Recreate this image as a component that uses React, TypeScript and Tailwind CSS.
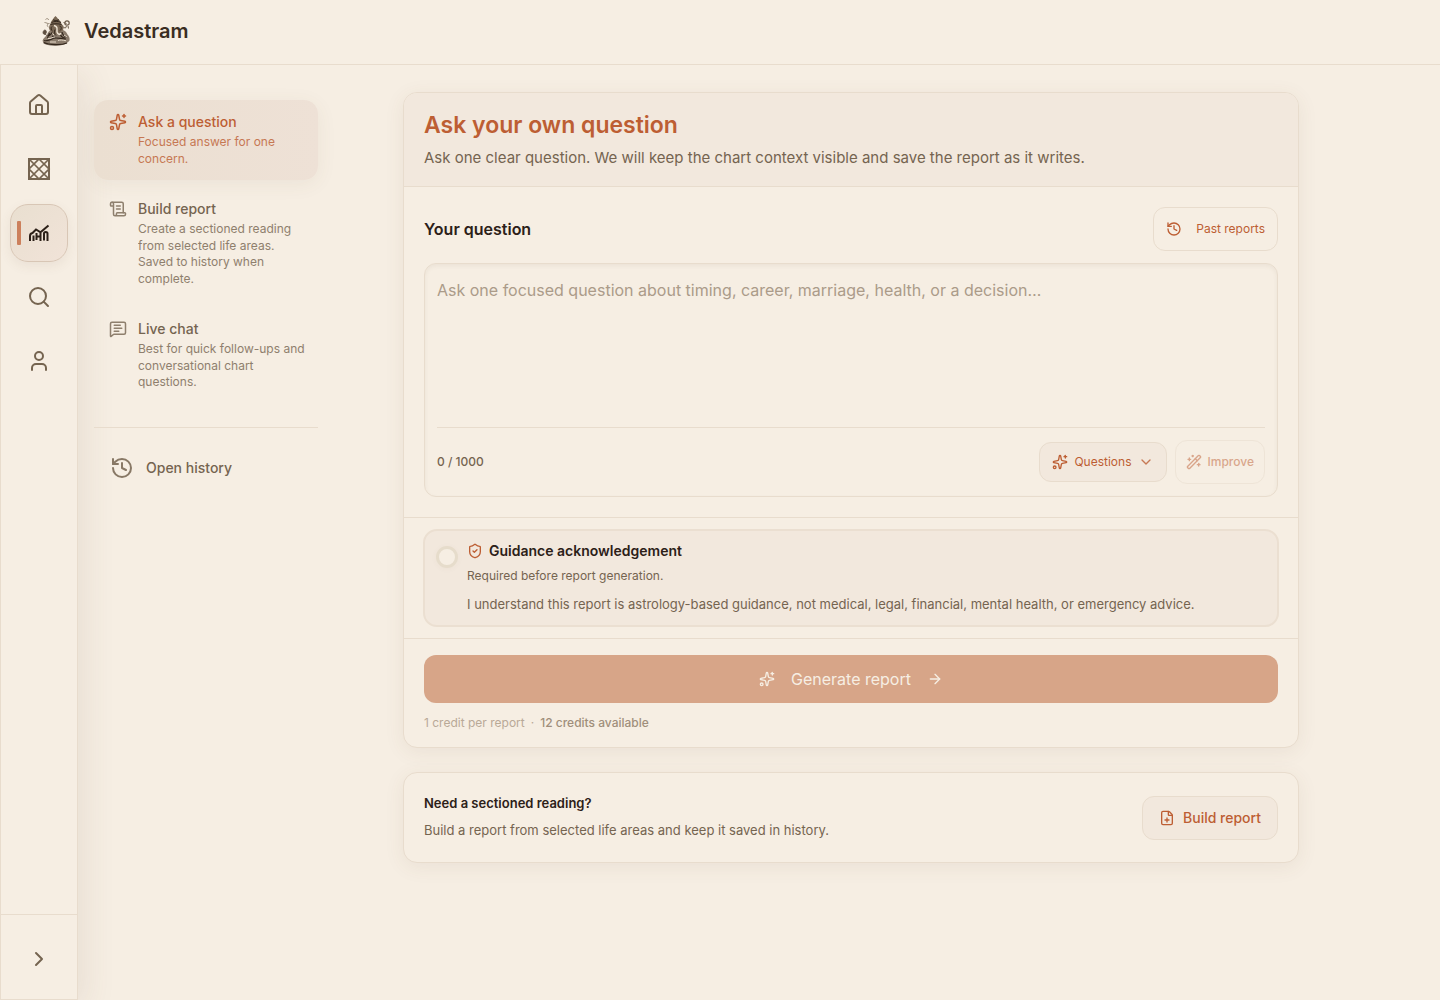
import React from "react";
import {
  ArrowRight,
  ChevronDown,
  ChevronRight,
  FilePlus,
  History,
  House,
  MessageSquareText,
  ScrollText,
  Search,
  ShieldCheck,
  Sparkles,
  User,
  WandSparkles,
} from "lucide-react";

function SparkleIcon({ size = 16 }: { size?: number }) {
  return <Sparkles size={size} strokeWidth={2} className="shrink-0" aria-hidden="true" />;
}

function GaneshaLogo() {
  return (
    <svg width="32" height="32" viewBox="0 0 32 32" fill="none" aria-hidden="true" className="shrink-0">
      <ellipse cx="15" cy="27.500" rx="12" ry="3.200" fill="#85776a" />
      <path d="M2.500 26c.5-3 3-4 4.500-6 .8-2.500 2-4.500 4.500-5.500h10c3 .5 5 2.500 6 5 1.500 1.500 2.500 3.500 2 6-2 3-7 4.500-13 4.500S4 29 2.500 26z" fill="#8a7b6c" />
      <path d="M10.500 8.500C11 5.500 13 5 14 2.500l1.500-1.500L17 2.500c1 2 4 3 4.500 6.500l2 2c.5 3-.5 5-2.500 5.500l-2 3h-5l-2.500-3c-2.500-1-3-3.500-2-6z" fill="#7a6855" />
      <path d="M11.500 7.500c2.500-1.500 7-1.500 9.500 0M13 4.800l3 1 3-1M10.500 9.500c3-1 8-1 11 0" stroke="#33271d" strokeWidth="1" />
      <path d="M14 10.500c2 .5 3.300 2 3 4-.3 2.500 0 4 1.500 4.500s2 0 2-1" stroke="#efe4d5" strokeWidth="1.400" />
      <path d="M12 11.500c-1.500 1-1 4 .5 4.500M19.500 11c2 0 2.500 3 .5 4.500M15 14.500c-1 2-.5 5 1 6" stroke="#33271d" strokeWidth="1" />
      <path d="M7.500 20.500c2 .5 3.500-1 4.500-3M9.500 18l-2 5M22 17c.5 2.500 2.500 4.500 5 5M20.500 20c1 2 3 3 5 3" stroke="#33271d" strokeWidth="1.200" />
      <path d="M4 25.500c4 1.500 8-2.500 12-2.500 3 0 6 1 10 1M4 27.500c5 2.500 17 3 23 .5M12 21l3 1.500" stroke="#33271d" strokeWidth="1.200" />
      <path d="M8 23.500c3 .5 4-1.500 7-1.500M18 25.500c2-.8 5-.6 8 .3M10 27h6M24 20l3 2M12.500 18.500l1.500 1.500" stroke="#e6dac9" strokeWidth="1" />
      <path d="M5.500 4.500c1.500-1.500 3-1 3 .5M4.500 7.500c2 0 3 1.500 5 1M8.500 12c-1.500-.5-1.500-2-.5-3" stroke="#9b8d7c" strokeWidth="1" />
      <path d="M3 18c0-2 1-3 2-3s2 2 1 3.500-2.500 1-3-.5zM5 19l2.500 2" fill="#5d4e40" stroke="#5d4e40" strokeWidth=".8" />
      <circle cx="27" cy="8" r="2.200" stroke="#6d5d4c" strokeWidth="1.200" />
      <path d="M23.500 7.500l3 1M26.500 11l-1 2-2-.5M28 11l.5 2.500" stroke="#6d5d4c" strokeWidth="1" />
    </svg>
  );
}

function KundliIcon() {
  return (
    <svg width="24" height="24" viewBox="0 0 24 24" fill="none" stroke="currentColor" strokeWidth="2" aria-hidden="true">
      <path d="M2 2h20v20H2z" />
      <path strokeWidth="1.750" d="M2 2l20 20 M22 2L2 22 M12 2l10 10-10 10L2 12z" />
    </svg>
  );
}

function PredictionIcon() {
  return (
    <svg width="24" height="24" viewBox="0 0 24 24" fill="none" stroke="currentColor" strokeWidth="2" aria-hidden="true">
      <path d="M3 20v-5c0-1.700.8-2.700 2.500-3L9 8.500l4.500 2.800L21.500 4.500" />
      <path d="M6.500 20v-5.500M9.500 12v7M9.500 15.500h5M13.500 12v8M17 19.500v-7c0-2 3.500-2 3.500 0V20" />
    </svg>
  );
}

const railItems = [
  { label: "Home", icon: <House size={24} strokeWidth={2} /> },
  { label: "Chart", icon: <KundliIcon /> },
  { label: "Predictions", icon: <PredictionIcon />, active: true },
  { label: "Search", icon: <Search size={24} strokeWidth={2} /> },
  { label: "Profile", icon: <User size={24} strokeWidth={2} /> },
];

const modes = [
  {
    title: "Ask a question",
    text: "Focused answer for one concern.",
    icon: <Sparkles size={18} />,
    active: true,
  },
  {
    title: "Build report",
    text: "Create a sectioned reading from selected life areas. Saved to history when complete.",
    icon: <ScrollText size={18} />,
  },
  {
    title: "Live chat",
    text: "Best for quick follow-ups and conversational chart questions.",
    icon: <MessageSquareText size={18} />,
  },
];

function Rail() {
  return (
    <aside className="flex w-[78px] shrink-0 flex-col border border-t-0 border-[#e8dccd] bg-[#f6eee3] shadow-[8px_8px_32px_rgba(100,80,50,0.09)]">
      <nav aria-label="Main" className="flex flex-1 flex-col items-center gap-1.5 pt-[11px]">
        {railItems.map((item) =>
          item.active ? (
            <a
              key={item.label}
              href="#"
              aria-label={item.label}
              aria-current="page"
              className="relative flex size-[58px] items-center justify-center rounded-[18px] border border-[#d8c6b5] bg-linear-to-br from-[#e9dfd0] to-[#f1e3d8] text-[#2c2018] shadow-[0_4px_12px_rgba(100,80,50,0.08)]"
            >
              <span className="absolute left-1.5 h-6 w-1 rounded-[1px] bg-[#cc805c]" />
              {item.icon}
            </a>
          ) : (
            <a key={item.label} href="#" aria-label={item.label} className="flex size-[58px] items-center justify-center text-[#756450]">
              {item.icon}
            </a>
          ),
        )}
      </nav>
      <div className="flex h-[85px] items-center justify-center border-t border-[#e8dccd] pt-1">
        <button type="button" aria-label="Expand sidebar" className="flex size-11 items-center justify-center text-[#756450]">
          <ChevronRight size={24} strokeWidth={2} />
        </button>
      </div>
    </aside>
  );
}

function ModeNav() {
  return (
    <nav aria-label="Report modes" className="mt-[35px] ml-4 w-56 shrink-0">
      <div className="flex flex-col gap-[7px] border-b border-[#e8dccd] pb-[23px]">
        {modes.map((mode) => (
          <a
            key={mode.title}
            href="#"
            className={
              mode.active
                ? "flex gap-[11px] rounded-[14px] bg-linear-to-r from-[#ebdfd1] to-[#eee1d6] pt-3 pr-2 pb-[13px] pl-[15px] text-[#bd5e33] shadow-[0_4px_20px_rgba(100,80,50,0.07)]"
                : "flex gap-[11px] rounded-[14px] pt-3 pr-2 pb-[13px] pl-[15px] text-[#756450]"
            }
          >
            <span className={mode.active ? "mt-px shrink-0" : "mt-px shrink-0 opacity-80"}>{mode.icon}</span>
            <span>
              <span className="block text-[14px] leading-5 font-medium">{mode.title}</span>
              <span className="mt-0.5 block text-[12px] leading-snug opacity-80">{mode.text}</span>
            </span>
          </a>
        ))}
      </div>
      <a href="#" className="mt-[18px] flex h-11 items-center gap-3 pl-4 text-[14px] font-medium text-[#756450]">
        <History size={24} className="opacity-85" />
        Open history
      </a>
    </nav>
  );
}

function QuestionCard() {
  return (
    <section className="overflow-hidden rounded-[14px] border border-[#e8dccd] bg-[#f6eee3] shadow-[0_4px_20px_rgba(100,80,50,0.08)]">
      <header className="border-b border-[#e8dccd] bg-[#f2e8dd] px-5 py-4">
        <h1 className="text-[23px] leading-8 font-semibold text-[#bd5e33]">Ask your own question</h1>
        <p className="mt-1 text-[15px] leading-[25px] text-[#756450]">
          Ask one clear question. We will keep the chart context visible and save the report as it writes.
        </p>
      </header>

      <div className="border-b border-[#e8dccd] p-5">
        <div className="flex items-center justify-between">
          <label htmlFor="question" className="text-[16px] font-semibold text-[#2c2018]">
            Your question
          </label>
          <button
            type="button"
            className="flex h-11 items-center gap-3.5 rounded-xl border border-[#e8dccd] px-3 text-[12px] text-[#bd5e33]"
          >
            <History size={16} strokeWidth={2} aria-hidden="true" />
            Past reports
          </button>
        </div>
        <div className="mt-3 rounded-xl border border-[#e8dccd] px-3 pb-3 shadow-[inset_0_2px_4px_rgba(100,80,50,0.07)]">
          <textarea
            id="question"
            placeholder="Ask one focused question about timing, career, marriage, health, or a decision…"
            className="block h-[163px] w-full resize-none bg-transparent pt-3 text-[16px] leading-7 text-[#2c2018] outline-none placeholder:text-[#ab9b89]"
          />
          <div className="flex items-center justify-between border-t border-[#e8dccd] pt-3">
            <span className="text-[12px] font-medium text-[#756450]">0 / 1000</span>
            <div className="flex items-center gap-2">
              <button
                type="button"
                className="flex h-10 items-center gap-1.5 rounded-xl border border-[#e8dccd] bg-[#f2e8dd] px-3 text-[12px] text-[#bd5e33]"
              >
                <SparkleIcon />
                Questions
                <ChevronDown size={16} strokeWidth={2} className="opacity-80" aria-hidden="true" />
              </button>
              <button
                type="button"
                disabled
                className="flex h-11 items-center gap-1.5 rounded-xl border border-[#e8dccd] px-2.5 text-[12px] font-medium text-[#bd5e33] opacity-50"
              >
                <WandSparkles size={16} aria-hidden="true" />
                Improve
              </button>
            </div>
          </div>
        </div>
      </div>

      <div className="border-b border-[#e8dccd] px-[19px] py-[11px]">
        <label className="flex cursor-pointer gap-[9px] rounded-[14px] border-2 border-[#ebdfd1] bg-[#f2e8dd] px-[11px] py-2.5">
          <input
            type="checkbox"
            className="mt-[5px] size-[22px] shrink-0 appearance-none rounded-full border-3 border-[#e6dccb] bg-[#f6eee3] shadow-[0_1px_6px_rgba(100,80,50,0.04)]"
          />
          <span className="block text-[#756450]">
            <span className="flex items-center gap-1.5 text-[14px] leading-5 font-semibold text-[#2c2018]">
              <ShieldCheck size={16} strokeWidth={2} className="text-[#bd5e33]" aria-hidden="true" />
              Guidance acknowledgement
            </span>
            <span className="mt-1.5 block text-[12px] leading-[18px]">Required before report generation.</span>
            <span className="mt-2 block text-[13px] leading-[22px]">
              I understand this report is astrology-based guidance, not medical, legal, financial, mental health, or
              emergency advice.
            </span>
          </span>
        </label>
      </div>

      <div className="px-5 pt-4 pb-[15px]">
        <button
          type="button"
          disabled
          className="flex h-12 w-full items-center justify-center gap-4 rounded-xl bg-[#d7a588] text-[16px] text-[#f6eee3]"
        >
          <SparkleIcon />
          Generate report
          <ArrowRight size={16} aria-hidden="true" />
        </button>
        <p className="mt-2.5 flex gap-1.5 text-[12px] leading-[19px] text-[#b9a997]">
          <span>1 credit per report</span>
          <span aria-hidden="true">·</span>
          <span className="font-medium text-[#a08e7b]">12 credits available</span>
        </p>
      </div>
    </section>
  );
}

function SectionedCard() {
  return (
    <section className="mt-6 flex items-center justify-between rounded-[14px] border border-[#e8dccd] bg-[#f6eee3] px-5 pt-[18px] pb-5 shadow-[0_4px_20px_rgba(100,80,50,0.08)]">
      <div>
        <h2 className="text-[13px] leading-6 font-semibold text-[#2c2018]">Need a sectioned reading?</h2>
        <p className="mt-[3px] text-[13px] leading-6 text-[#756450]">
          Build a report from selected life areas and keep it saved in history.
        </p>
      </div>
      <button
        type="button"
        className="mt-0.5 flex h-11 items-center gap-2 rounded-xl border border-[#e8dccd] bg-[#f2e8dd] px-4 text-[14px] font-medium text-[#bd5e33]"
      >
        <FilePlus size={16} aria-hidden="true" />
        Build report
      </button>
    </section>
  );
}

export default function App() {
  return (
    <div className="flex min-h-screen flex-col bg-[#f6eee3] font-['Inter','Liberation_Sans',sans-serif]">
      <header className="relative z-10 flex h-[65px] items-center gap-3 border-b border-[#e8dccd] bg-[#f6eee3] px-10 pb-0.5">
        <GaneshaLogo />
        <span className="text-[20px] font-semibold text-[#3a2d22]">Vedastram</span>
      </header>
      <div className="flex flex-1">
        <Rail />
        <ModeNav />
        <main className="mr-20 ml-6 flex-1 pt-[27px] pb-10">
          <div className="mx-auto max-w-4xl">
            <QuestionCard />
            <SectionedCard />
          </div>
        </main>
      </div>
    </div>
  );
}
